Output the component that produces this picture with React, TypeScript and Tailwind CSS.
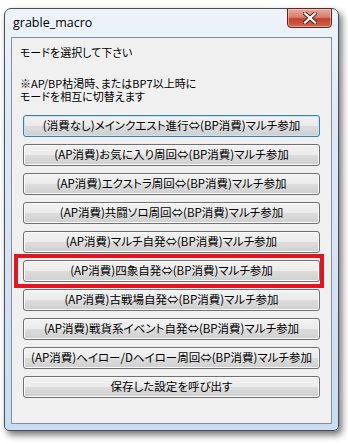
import React from "react";

const modes = [
  "(消費なし)メインクエスト進行⇔(BP消費)マルチ参加",
  "(AP消費)お気に入り周回⇔(BP消費)マルチ参加",
  "(AP消費)エクストラ周回⇔(BP消費)マルチ参加",
  "(AP消費)共闘ソロ周回⇔(BP消費)マルチ参加",
  "(AP消費)マルチ自発⇔(BP消費)マルチ参加",
  "(AP消費)四象自発⇔(BP消費)マルチ参加",
  "(AP消費)古戦場自発⇔(BP消費)マルチ参加",
  "(AP消費)戦貨系イベント自発⇔(BP消費)マルチ参加",
  "(AP消費)ヘイロー/Dヘイロー周回⇔(BP消費)マルチ参加",
  "保存した設定を呼び出す",
];

function CloseButton() {
  return (
    <div className="absolute top-[-1px] right-[6px] w-[45px] h-[20px] rounded-b-[4px] border border-[#5a2a22] bg-[linear-gradient(to_bottom,#e9a99b_0%,#d7806e_45%,#c2412b_55%,#d0664f_100%)] shadow-[inset_0_0_0_1px_rgba(255,220,210,0.5)] flex items-center justify-center">
      <svg width="14" height="12" viewBox="0 0 14 12">
        <path d="M2 1.5 L12 10.5 M12 1.5 L2 10.5" stroke="#5b2018" strokeWidth="4" strokeLinecap="square" />
        <path d="M2 1.5 L12 10.5 M12 1.5 L2 10.5" stroke="#ffffff" strokeWidth="2.2" strokeLinecap="square" />
      </svg>
    </div>
  );
}

function ModeButton({ label, focused }: { label: string; focused?: boolean }) {
  return (
    <button
      className={
        "block w-[297px] h-[22px] rounded-[3px] border text-[11.5px] leading-none text-black whitespace-nowrap [font-feature-settings:'palt'] bg-[linear-gradient(to_bottom,#f2f2f2_0%,#ebebeb_50%,#dddddd_50%,#cfcfcf_100%)] " +
        (focused
          ? "border-[#3c7fb1] shadow-[inset_0_0_0_1px_#c4e5f6]"
          : "border-[#707070] shadow-[inset_0_0_0_1px_#fbfbfb]")
      }
    >
      {label}
    </button>
  );
}

export default function App() {
  return (
    <div className="w-[348px] h-[444px] bg-white pt-[8px] pl-[4px] font-['Noto_Sans_CJK_JP','Noto_Sans',sans-serif]">
      <div className="relative w-[335px] h-[423px] rounded-t-[7px] rounded-b-[5px] border border-[#4a4f57] bg-[linear-gradient(to_bottom,#eef3f9_0%,#dde8f5_30%,#c9dcf1_100%)] shadow-[3px_4px_7px_rgba(0,0,0,0.55)] flex flex-col px-[6px] pb-[6px]">
        <div className="h-[28px] flex items-center pl-[2px] pt-[1px] text-[12.5px] text-black font-['Open_Sans','Noto_Sans',sans-serif]">
          grable_macro
        </div>
        <CloseButton />
        <div className="flex-1 border border-[#83909f] bg-[#f0f0f0] flex flex-col">
          <div className="pl-[8px] pt-[8px] text-[11px] leading-[13px] text-black [font-feature-settings:'palt']">
            <p>モードを選択して下さい</p>
            <p className="mt-[18px]">※AP/BP枯渇時、またはBP7以上時に</p>
            <p>モードを相互に切替えます</p>
          </div>
          <div className="mt-[12px] ml-[11px] flex flex-col gap-[7px]">
            {modes.map((m, i) => (
              <div key={m} className="relative">
                <ModeButton label={m} focused={i === 0} />
                {i === 5 && (
                  <div className="absolute left-[-9px] right-[7px] top-[-6px] bottom-[-6px] border-4 border-[#e3161f] pointer-events-none" />
                )}
              </div>
            ))}
          </div>
        </div>
      </div>
    </div>
  );
}
